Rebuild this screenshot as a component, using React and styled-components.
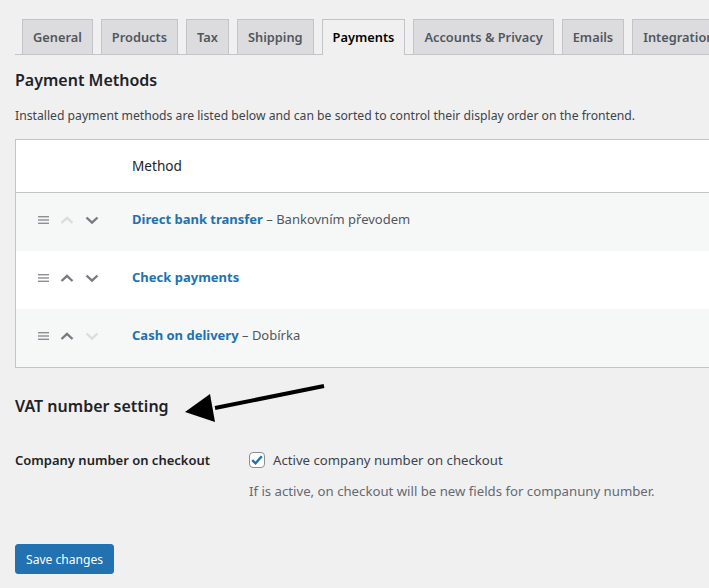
import React from 'react';
import styled, { createGlobalStyle } from 'styled-components';

const GlobalStyle = createGlobalStyle`
  body {
    margin: 0;
    background: #f0f0f1;
    font-family: "Noto Sans", "Open Sans", sans-serif;
    color: #3c434a;
    overflow: hidden;
  }
`;

const tabs = ['General', 'Products', 'Tax', 'Shipping', 'Payments', 'Accounts & Privacy', 'Emails', 'Integration'];

const methods = [
  { name: 'Direct bank transfer', note: 'Bankovním převodem', up: false, down: true },
  { name: 'Check payments', note: '', up: true, down: true },
  { name: 'Cash on delivery', note: 'Dobírka', up: true, down: false },
];

function Chevron({ dir, enabled }) {
  const d = dir === 'up' ? 'M1.5 7 L7 1.8 L12.5 7' : 'M1.5 1.5 L7 6.7 L12.5 1.5';
  return (
    <svg width="14" height="9" viewBox="0 0 14 9">
      <path d={d} fill="none" stroke={enabled ? '#787c82' : '#dcdcde'} strokeWidth="2.4" />
    </svg>
  );
}

function Handle() {
  return (
    <svg width="11" height="8" viewBox="0 0 11 8">
      <rect x="0" y="0" width="11" height="1.4" fill="#8c8f94" />
      <rect x="0" y="3.3" width="11" height="1.4" fill="#8c8f94" />
      <rect x="0" y="6.6" width="11" height="1.4" fill="#8c8f94" />
    </svg>
  );
}

function App() {
  return (
    <>
      <GlobalStyle />
      <Page>
        <TabBar>
          {tabs.map((t) => (
            <Tab key={t} active={t === 'Payments'}>{t}</Tab>
          ))}
        </TabBar>

        <Heading top={13}>Payment Methods</Heading>
        <Intro>Installed payment methods are listed below and can be sorted to control their display order on the frontend.</Intro>

        <Table>
          <HeadRow>
            <SortCell />
            <HeadCell>Method</HeadCell>
          </HeadRow>
          {methods.map((m, i) => (
            <Row key={m.name} striped={i % 2 === 0}>
              <SortCell>
                <Handle />
                <Chevron dir="up" enabled={m.up} />
                <Chevron dir="down" enabled={m.down} />
              </SortCell>
              <MethodCell>
                <MethodLink>{m.name}</MethodLink>
                {m.note && <span> – {m.note}</span>}
              </MethodCell>
            </Row>
          ))}
        </Table>

        <VatSection>
          <Heading top={0}>VAT number setting</Heading>
          <Arrow width="150" height="50" viewBox="0 0 150 50">
            <line x1="139" y1="5" x2="30" y2="27" stroke="#000" strokeWidth="4" />
            <polygon points="0,31 25,13 30,41" fill="#000" />
          </Arrow>
        </VatSection>

        <FormRow>
          <FieldLabel>Company number on checkout</FieldLabel>
          <Field>
            <CheckLine>
              <CheckBox>
                <svg width="12" height="10" viewBox="0 0 12 10">
                  <path d="M1.2 5.2 L4.5 8.3 L10.8 1.2" fill="none" stroke="#2271b1" strokeWidth="2.4" />
                </svg>
              </CheckBox>
              Active company number on checkout
            </CheckLine>
            <Help>If is active, on checkout will be new fields for companuny number.</Help>
          </Field>
        </FormRow>

        <SaveButton>Save changes</SaveButton>
      </Page>
    </>
  );
}

export default App;

const Page = styled.div`
  width: 780px;
  padding: 19px 0 0 15px;
`;

const TabBar = styled.div`
  display: flex;
  gap: 8px;
  padding-left: 7px;
  border-bottom: 1px solid #c3c4c7;
`;

const Tab = styled.div`
  padding: 5px 10px;
  font-size: 12.8px;
  line-height: 24px;
  font-weight: 600;
  white-space: nowrap;
  border: 1px solid #c3c4c7;
  border-bottom: none;
  margin-bottom: ${(p) => (p.active ? '-1px' : '0')};
  background: ${(p) => (p.active ? '#f0f0f1' : '#dcdcde')};
  color: ${(p) => (p.active ? '#000' : '#50575e')};
  padding-bottom: ${(p) => (p.active ? '6px' : '5px')};
`;

const Heading = styled.h2`
  margin: ${(p) => p.top}px 0 0;
  font-size: 16px;
  line-height: 24px;
  font-weight: 600;
  color: #1d2327;
`;

const Intro = styled.p`
  margin: 0 0 13px;
  padding-top: 14px;
  font-size: 12.2px;
  line-height: 20px;
`;

const Table = styled.div`
  width: 760px;
  background: #fff;
  border: 1px solid #c3c4c7;
  font-size: 13px;
`;

const HeadRow = styled.div`
  display: flex;
  align-items: center;
  height: 52px;
  border-bottom: 1px solid #c3c4c7;
`;

const HeadCell = styled.div`
  color: #1d2327;
  font-size: 13.6px;
  margin-top: -1px;
`;

const Row = styled.div`
  display: flex;
  align-items: center;
  height: 58px;
  padding-bottom: 7px;
  box-sizing: border-box;
  background: ${(p) => (p.striped ? '#f6f7f7' : '#fff')};
`;

const SortCell = styled.div`
  width: 116px;
  display: flex;
  align-items: center;
  gap: 11px;
  padding-left: 22px;
  padding-top: 3px;
  box-sizing: border-box;
`;

const MethodCell = styled.div`
  color: #50575e;
`;

const MethodLink = styled.span`
  color: #2271b1;
  font-weight: 700;
`;

const VatSection = styled.div`
  position: relative;
  margin-top: 26px;
`;

const Arrow = styled.svg`
  position: absolute;
  left: 170px;
  top: -13px;
`;

const FormRow = styled.div`
  display: flex;
  margin-top: 32px;
`;

const FieldLabel = styled.div`
  width: 234px;
  font-size: 13px;
  font-weight: 600;
  color: #1d2327;
  line-height: 20px;
`;

const Field = styled.div`
  font-size: 13.2px;
`;

const CheckLine = styled.div`
  display: flex;
  align-items: center;
  gap: 8px;
  color: #3c434a;
  line-height: 20px;
`;

const CheckBox = styled.span`
  width: 16px;
  height: 16px;
  box-sizing: border-box;
  border: 1px solid #8c8f94;
  border-radius: 4px;
  background: #fff;
  display: flex;
  align-items: center;
  justify-content: center;
`;

const Help = styled.p`
  margin: 11px 0 0;
  color: #646970;
  line-height: 20px;
`;

const SaveButton = styled.button`
  display: block;
  margin-top: 43px;
  height: 30px;
  padding: 0 10px;
  background: #2271b1;
  border: 1px solid #2271b1;
  border-radius: 3px;
  color: #fff;
  font-family: inherit;
  font-size: 12.1px;
`;
